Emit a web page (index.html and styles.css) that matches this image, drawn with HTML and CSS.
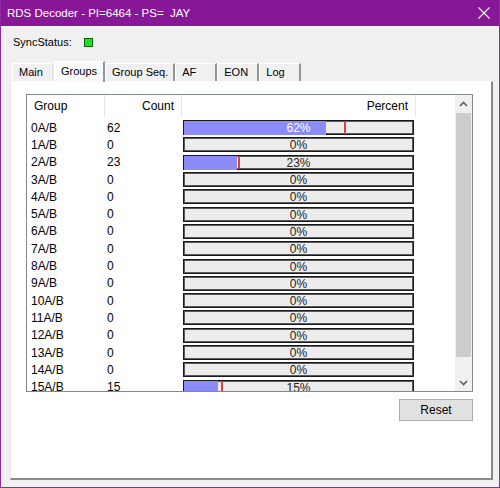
FILE: index.html
```html
<!DOCTYPE html>
<html lang="en">
<head>
  <meta charset="UTF-8">
  <title>RDS Decoder</title>
  <link rel="stylesheet" href="styles.css">
</head>
<body>
  <div class="window">
    <!-- Barra de título -->
    <div class="titlebar">
      <span class="title">RDS Decoder - PI=6464 - PS=  JAY</span>
      <svg class="close" viewBox="0 0 12 12" width="12" height="12">
        <path d="M0.5 0.5 L11.5 11.5 M11.5 0.5 L0.5 11.5" stroke="#fff" stroke-width="1.1" fill="none"/>
      </svg>
    </div>

    <div class="client">
      <div class="sync">
        <span>SyncStatus:</span>
        <span class="led"></span>
      </div>

      <!-- Pestañas -->
      <div class="tabs">
        <span class="tab">Main</span>
        <span class="tab active">Groups</span>
        <span class="tab">Group Seq.</span>
        <span class="tab">AF</span>
        <span class="tab">EON</span>
        <span class="tab">Log</span>
      </div>

      <div class="tabpage">
        <div class="listview">
          <div class="list-main">
            <div class="list-head">
              <div class="hcell">Group</div>
              <div class="hcell right">Count</div>
              <div class="hcell right">Percent</div>
            </div>
            <div class="list-body" id="groupList"></div>
          </div>

          <!-- Barra de desplazamiento -->
          <div class="vscroll">
            <div class="sb-btn">
              <svg viewBox="0 0 9 6" width="9" height="6"><path d="M1 5 L4.5 1.5 L8 5" stroke="#606060" stroke-width="1.6" fill="none"/></svg>
            </div>
            <div class="sb-track"><div class="sb-thumb"></div></div>
            <div class="sb-btn">
              <svg viewBox="0 0 9 6" width="9" height="6"><path d="M1 1 L4.5 4.5 L8 1" stroke="#606060" stroke-width="1.6" fill="none"/></svg>
            </div>
          </div>
        </div>

        <div class="actions">
          <button class="btn">Reset</button>
        </div>
      </div>
    </div>
  </div>

  <script>
    // Contadores por tipo de grupo: [nombre, cuenta, porcentaje, pico]
    const groups = [
      ['0A/B', 62, 62, 70],
      ['1A/B', 0, 0, 0],
      ['2A/B', 23, 23, 23.5],
      ['3A/B', 0, 0, 0],
      ['4A/B', 0, 0, 0],
      ['5A/B', 0, 0, 0],
      ['6A/B', 0, 0, 0],
      ['7A/B', 0, 0, 0],
      ['8A/B', 0, 0, 0],
      ['9A/B', 0, 0, 0],
      ['10A/B', 0, 0, 0],
      ['11A/B', 0, 0, 0],
      ['12A/B', 0, 0, 0],
      ['13A/B', 0, 0, 0],
      ['14A/B', 0, 0, 0],
      ['15A/B', 15, 15, 16]
    ];

    const list = document.getElementById('groupList');
    groups.forEach(([name, count, pct, peak]) => {
      const row = document.createElement('div');
      row.className = 'row';
      let bar = `<div class="bar">`;
      if (pct > 0) {
        bar += `<div class="fill" style="width:${pct}%"></div>`;
        bar += `<div class="peak" style="left:${peak}%"></div>`;
      }
      const onFill = pct > 55 ? ' on-fill' : '';
      bar += `<div class="pct${onFill}">${pct}%</div></div>`;
      row.innerHTML = `<div class="cell-group">${name}</div><div class="cell-count">${count}</div>${bar}`;
      list.appendChild(row);
    });
  </script>
</body>
</html>
```

FILE: styles.css
```css
/* Ventana estilo Windows 10 */
:root {
  --accent: #881798;
  --face: #f0f0f0;
  --bar-blue: #8c8cf8;
  --bar-empty: #ececec;
}

* {
  box-sizing: border-box;
}

body {
  margin: 0;
  font-family: "Liberation Sans", Arial, sans-serif;
  font-size: 12px;
  color: #000;
  background: var(--face);
}

.window {
  width: 500px;
  height: 488px;
  border: 1px solid #8e2a9f;
  border-top: 0;
  display: flex;
  flex-direction: column;
}

/* Barra de título */
.titlebar {
  height: 26px;
  background: var(--accent);
  color: #fff;
  display: flex;
  align-items: center;
  justify-content: space-between;
  padding: 0 9px 0 6px;
}

.title {
  white-space: pre;
  font-size: 11.5px;
}

.close {
  display: block;
}

.client {
  flex: 1;
  display: flex;
  flex-direction: column;
  padding: 0 6px 7px 9px;
  background: var(--face);
}

.sync {
  display: flex;
  align-items: center;
  gap: 12px;
  height: 16px;
  margin: 8px 0 0 3px;
  font-size: 11px;
}

.led {
  width: 9px;
  height: 9px;
  background: #1ee01e;
  border: 1px solid #0b5e0b;
}

/* Pestañas */
.tabs {
  display: flex;
  align-items: flex-end;
  height: 20px;
  margin-top: 11px;
  padding-left: 2px;
  font-size: 11px;
}

.tab {
  height: 18px;
  line-height: 17px;
  min-width: 42px;
  padding: 0 5px 0 6px;
  border-top: 1px solid #fff;
  border-left: 1px solid #fff;
  border-right: 2px solid #959595;
  background: var(--face);
}

.tab:first-child {
  border-right-color: #e6e6e6;
}

.tab.active {
  min-width: 51px;
  height: 21px;
  line-height: 19px;
  margin-bottom: -1px;
  background: #fafafa;
  position: relative;
  z-index: 1;
}

.tabpage {
  flex: 1;
  background: #fff;
  border-top: 1px solid #fff;
  border-left: 1px solid #e8e8e8;
  border-right: 2px solid #8a8a8a;
  border-bottom: 2px solid #8a8a8a;
  padding: 12px 18px 0 15px;
}

/* Lista de grupos */
.listview {
  width: 447px;
  height: 298px;
  border: 1px solid #828790;
  display: flex;
  background: #fff;
}

.list-main {
  flex: 1;
  overflow: hidden;
}

.list-head,
.row {
  display: grid;
  grid-template-columns: 78px 77px 234px;
}

.list-head {
  height: 22px;
}

.hcell {
  border-right: 1px solid #e5e5e5;
  padding: 0 7px;
  line-height: 22px;
}

.hcell.right {
  text-align: right;
}

.list-body {
  padding-top: 2px;
}

.row {
  height: 17.3px;
  align-items: center;
}

.cell-group {
  padding-left: 4px;
}

.cell-count {
  padding-left: 2px;
}

.bar {
  position: relative;
  display: grid;
  height: 15px;
  margin: 0 2px 0 1px;
  background: var(--bar-empty);
  border: 1px solid #1a1a1a;
  box-shadow: inset 0 0 0 1px #5a5a5a;
}

.fill {
  grid-area: 1 / 1;
  background: var(--bar-blue);
  height: 100%;
}

.peak {
  position: absolute;
  top: 0;
  bottom: 0;
  width: 2px;
  background: #e0403c;
}

.pct {
  grid-area: 1 / 1;
  text-align: center;
  line-height: 14px;
  color: #222;
  position: relative;
}

.pct.on-fill {
  color: #fff;
}

/* Barra de desplazamiento */
.vscroll {
  width: 17px;
  display: flex;
  flex-direction: column;
  background: var(--face);
}

.sb-btn {
  height: 17px;
  display: flex;
  align-items: center;
  justify-content: center;
}

.sb-btn svg {
  display: block;
}

.sb-track {
  flex: 1;
  padding: 1px 1px 0 1px;
}

.sb-thumb {
  height: 244px;
  background: #cdcdcd;
}

/* Botón Reset */
.actions {
  display: flex;
  justify-content: flex-end;
  width: 447px;
  margin-top: 7px;
}

.btn {
  width: 74px;
  height: 22px;
  background: #e1e1e1;
  border: 1px solid #adadad;
  font-family: "Liberation Sans", Arial, sans-serif;
  font-size: 12px;
  color: #000;
  padding: 0;
}
```
